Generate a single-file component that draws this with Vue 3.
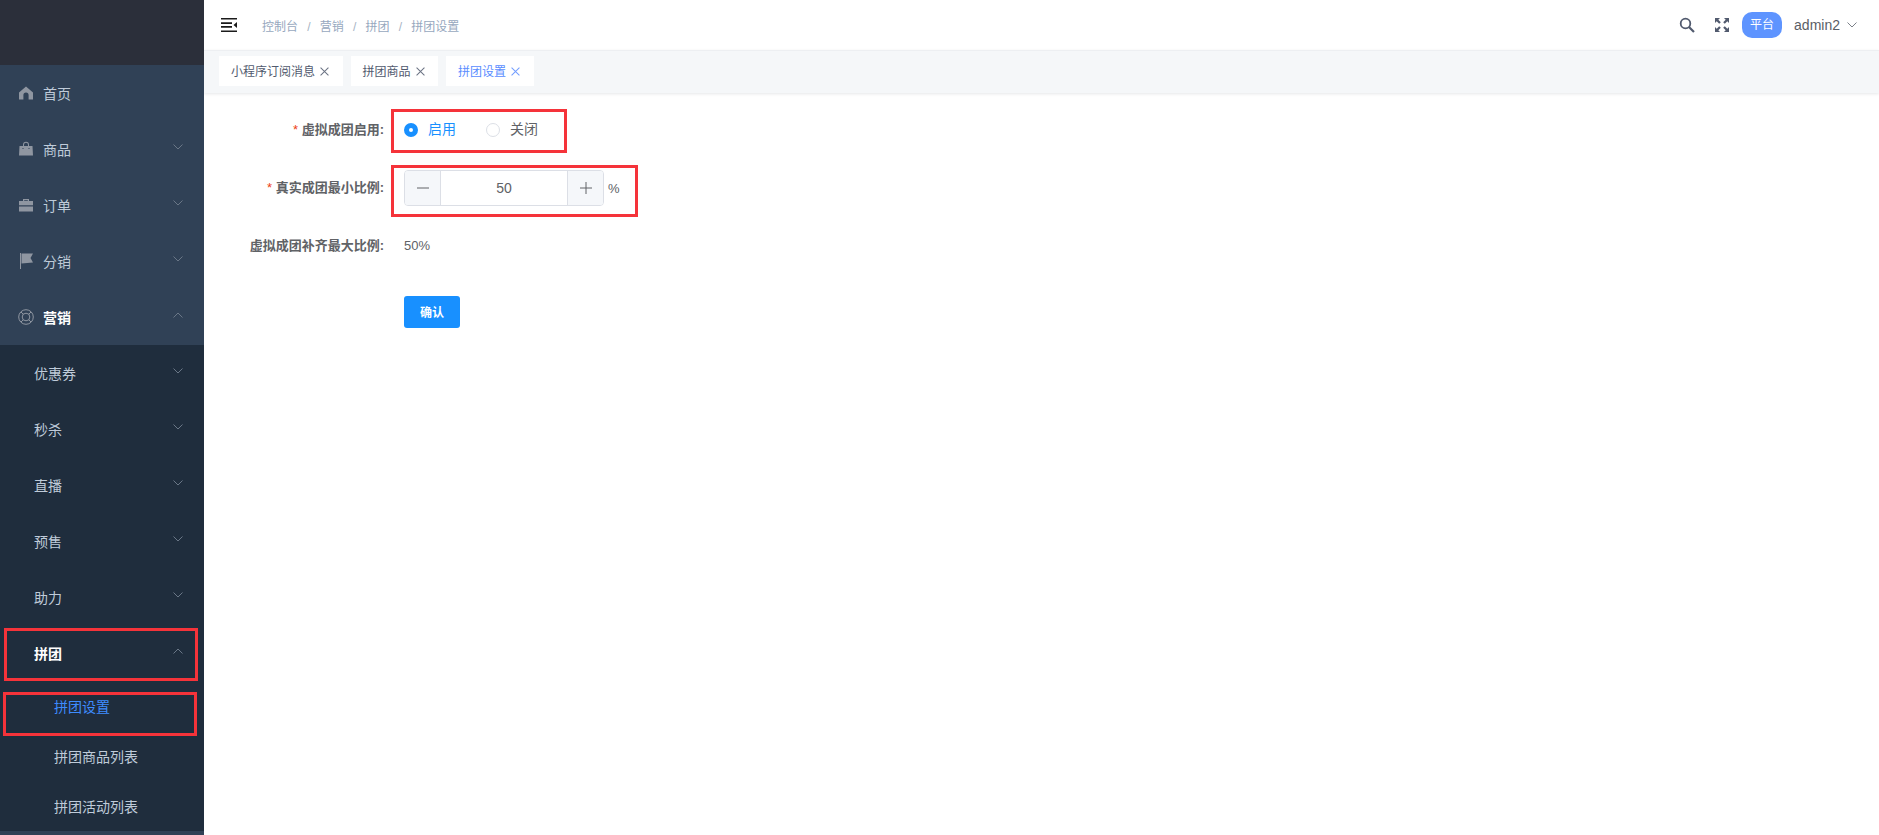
<script setup>
const topMenu = [
  { name: '首页', icon: 'home' },
  { name: '商品', icon: 'bag', arrow: 'down' },
  { name: '订单', icon: 'case', arrow: 'down' },
  { name: '分销', icon: 'flag', arrow: 'down' },
  { name: '营销', icon: 'buoy', arrow: 'up', active: true }
]
const subMenu = [
  { name: '优惠券', arrow: 'down' },
  { name: '秒杀', arrow: 'down' },
  { name: '直播', arrow: 'down' },
  { name: '预售', arrow: 'down' },
  { name: '助力', arrow: 'down' },
  { name: '拼团', arrow: 'up', active: true }
]
const leaves = [
  { name: '拼团设置', active: true },
  { name: '拼团商品列表' },
  { name: '拼团活动列表' }
]
const crumbs = ['控制台', '营销', '拼团', '拼团设置']
const tags = [
  { name: '小程序订阅消息' },
  { name: '拼团商品' },
  { name: '拼团设置', active: true }
]
</script>

<template>
  <div class="page">
    <aside class="sidebar">
      <div class="logo"></div>
      <div v-for="m in topMenu" :key="m.name" class="item top" :class="{ on: m.active }">
        <svg class="mi" viewBox="0 0 16 16">
          <path v-if="m.icon === 'home'" d="M8 1.500 15 7.500V14.500H10.600V10.200A2.600 2.600 0 0 0 5.400 10.200V14.500H1V7.500Z" />
          <path v-else-if="m.icon === 'bag'" fill-rule="evenodd" d="M5 5V3.800A3 3 0 0 1 11 3.800V5H14.500L15 14.500H1L1.500 5ZM6 5H10V3.800A2 2 0 0 0 6 3.800ZM4.500 7V8H5.500V7ZM10.500 7V8H11.500V7Z" />
          <path v-else-if="m.icon === 'case'" fill-rule="evenodd" d="M5 4V2H11V4H15V8.200H1V4ZM6.200 4H9.800V3.200H6.200ZM1 9.400H15V14.500H1Z" />
          <path v-else-if="m.icon === 'flag'" d="M2 0H3V16H2ZM3.500 0.500H15L12.500 5 15 9.500 3.500 10.500Z" />
          <g v-else fill="none" stroke="currentColor" stroke-width="1">
            <circle cx="8" cy="8" r="7.300" />
            <circle cx="8" cy="8" r="3.800" />
            <path d="M3 3 5.300 5.300M13 3 10.700 5.300M3 13 5.300 10.700M13 13 10.700 10.700" />
          </g>
        </svg>
        <span class="label">{{ m.name }}</span>
        <svg v-if="m.arrow" class="arrow" :class="m.arrow" viewBox="0 0 10 6"><path d="M.5.500 5 5 9.500.500" /></svg>
      </div>
      <div class="sub">
        <div v-for="s in subMenu" :key="s.name" class="item second" :class="{ on: s.active }">
          <span class="label">{{ s.name }}</span>
          <svg class="arrow" :class="s.arrow" viewBox="0 0 10 6"><path d="M.5.500 5 5 9.500.500" /></svg>
        </div>
        <div v-for="l in leaves" :key="l.name" class="item leaf" :class="{ cur: l.active }">
          <span class="label">{{ l.name }}</span>
        </div>
      </div>
      <div class="mark mark-a"></div>
      <div class="mark mark-b"></div>
    </aside>

    <main class="main">
      <header class="navbar">
        <svg class="hamb" viewBox="0 0 16 14">
          <path d="M0 0H16V1.500H0ZM0 4.200H11V6H0ZM0 8H11V9.800H0ZM0 12.500H16V14H0ZM16 4V10L12.500 7Z" />
        </svg>
        <nav class="crumbs">
          <template v-for="(c, i) in crumbs" :key="c">
            <span v-if="i" class="sep">/</span>
            <span>{{ c }}</span>
          </template>
        </nav>
        <div class="right">
          <svg class="tool" viewBox="0 0 16 16"><circle cx="6.500" cy="6.500" r="4.800" fill="none" stroke="#515a6e" stroke-width="1.800" /><path d="M10 10 15 15" stroke="#515a6e" stroke-width="2.200" /></svg>
          <svg class="tool full" viewBox="0 0 16 16"><path fill="#515a6e" d="M1 1H6L4.300 2.700 6.800 5.200 5.200 6.800 2.700 4.300 1 6ZM15 1V6L13.300 4.300 10.800 6.800 9.200 5.200 11.700 2.700 10 1ZM1 15V10L2.700 11.700 5.200 9.200 6.800 10.800 4.300 13.300 6 15ZM15 15H10L11.700 13.300 9.200 10.800 10.800 9.200 13.300 11.700 15 10Z" /></svg>
          <span class="badge">平台</span>
          <span class="user">admin2</span>
          <svg class="user-arrow" viewBox="0 0 10 6"><path d="M.5.500 5 5 9.500.500" /></svg>
        </div>
      </header>

      <div class="tags">
        <div v-for="t in tags" :key="t.name" class="tag" :class="{ active: t.active }">
          <span class="tag-text">{{ t.name }}</span>
          <svg class="close" viewBox="0 0 8 8"><path d="M.5.500 7.500 7.500M7.500.500 .5 7.500" /></svg>
        </div>
      </div>

      <form class="form" @submit.prevent>
        <div class="row r1">
          <label class="flabel"><i>*</i> 虚拟成团启用:</label>
          <div class="radios">
            <span class="radio checked"><b></b><em>启用</em></span>
            <span class="radio"><b></b><em>关闭</em></span>
          </div>
        </div>
        <div class="row r2">
          <label class="flabel"><i>*</i> 真实成团最小比例:</label>
          <div class="num">
            <span class="step">
              <svg viewBox="0 0 12 12"><path d="M0 6H12" /></svg>
            </span>
            <span class="val">50</span>
            <span class="step">
              <svg viewBox="0 0 12 12"><path d="M0 6H12M6 0V12" /></svg>
            </span>
          </div>
          <span class="pct">%</span>
        </div>
        <div class="row r3">
          <label class="flabel">虚拟成团补齐最大比例:</label>
          <span class="plain">50%</span>
        </div>
        <div class="row r4">
          <button class="btn" type="button">确认</button>
        </div>
        <div class="mark mark-c"></div>
        <div class="mark mark-d"></div>
      </form>
    </main>
  </div>
</template>

<style scoped>
.page {
  display: flex;
  width: 1879px;
  height: 835px;
  overflow: hidden;
  background: #fff;
  font-family: "Liberation Sans", "Noto Sans CJK SC", sans-serif;
  font-size: 12px;
  color: #515a6e;
}
.sidebar {
  position: relative;
  width: 204px;
  flex: none;
  background: #304156;
  overflow: hidden;
}
.logo {
  height: 65px;
  background: #2b2f3a;
}
.item {
  display: flex;
  align-items: center;
  color: #bfcbd9;
  font-size: 14px;
}
.top {
  height: 56px;
  padding-left: 18px;
  box-sizing: border-box;
}
.top.on .label,
.second.on .label {
  color: #fff;
  font-weight: 700;
}
.mi {
  width: 16px;
  height: 16px;
  margin-right: 9px;
  fill: #8f96a1;
  color: #8f96a1;
  flex: none;
}
.arrow {
  width: 10px;
  height: 6px;
  margin-left: auto;
  margin-right: 21px;
  margin-top: -4px;
  fill: none;
  stroke: #6a7787;
  stroke-width: 1;
}
.arrow.up {
  transform: rotate(180deg);
}
.sub {
  background: #1f2d3d;
  height: 486px;
}
.second {
  height: 56px;
  padding-left: 34px;
  box-sizing: border-box;
}
.leaf {
  height: 50px;
  padding-left: 54px;
  padding-bottom: 1px;
  box-sizing: border-box;
}
.leaf.cur {
  color: #3e8cff;
}
.mark {
  position: absolute;
  box-sizing: border-box;
  border: 3px solid #f5333a;
  pointer-events: none;
}
.mark-a {
  left: 4px;
  top: 628px;
  width: 194px;
  height: 53px;
}
.mark-b {
  left: 3px;
  top: 692px;
  width: 194px;
  height: 44px;
}
.main {
  flex: 1;
  min-width: 0;
  display: flex;
  flex-direction: column;
}
.navbar {
  height: 50px;
  flex: none;
  display: flex;
  align-items: center;
  padding: 0 22px 0 17px;
  box-sizing: border-box;
}
.hamb {
  width: 16px;
  height: 14px;
  fill: #1b1b1b;
  flex: none;
}
.crumbs {
  display: flex;
  align-items: baseline;
  gap: 9.200px;
  margin-left: 25px;
  color: #97a8be;
}
.sep {
  color: #a6b3c4;
}
.right {
  margin-left: auto;
  display: flex;
  align-items: center;
}
.tool {
  width: 16px;
  height: 16px;
  flex: none;
}
.full {
  margin-left: 19px;
}
.badge {
  width: 40px;
  height: 26px;
  margin-left: 12px;
  border-radius: 10px;
  background: #5e94ff;
  color: #fff;
  line-height: 26px;
  text-align: center;
}
.user {
  margin-left: 12px;
  font-size: 14px;
  color: #5a5e66;
}
.user-arrow {
  width: 10px;
  height: 6px;
  margin-left: 7px;
  fill: none;
  stroke: #7b8088;
  stroke-width: 1;
}
.tags {
  height: 43px;
  flex: none;
  display: flex;
  gap: 8px;
  padding: 5px 0 0 15px;
  box-sizing: border-box;
  background: #f5f7f9;
  box-shadow: 0 1px 3px rgba(0, 21, 41, .1);
  border-top: 1px solid #edeff2;
}
.tag {
  height: 30px;
  padding: 0 13.500px 0 12px;
  display: flex;
  align-items: center;
  gap: 5px;
  background: #fff;
  color: #515a6e;
}
.tag-text {
  margin-top: -2px;
}
.tag.active {
  color: #5a8dff;
}
.close {
  width: 9px;
  height: 9px;
  fill: none;
  stroke: currentColor;
  stroke-width: .9;
  opacity: .85;
}
.form {
  position: relative;
  flex: 1;
  margin: 0;
}
.row {
  display: flex;
  align-items: center;
  position: absolute;
  left: 0;
}
.r1 { top: 15px; height: 44px; }
.r2 { top: 73px; height: 44px; }
.r3 { top: 131px; height: 44px; }
.r4 { top: 203px; height: 32px; left: 200px; }
.flabel {
  width: 180px;
  margin-right: 20px;
  margin-top: -4px;
  text-align: right;
  font-size: 13px;
  font-weight: 700;
  color: #606266;
  white-space: nowrap;
}
.flabel i {
  font-style: normal;
  font-weight: 400;
  color: #ed4014;
}
.radios {
  display: flex;
  gap: 30px;
}
.radio {
  display: flex;
  align-items: center;
  gap: 10px;
  font-size: 14px;
  color: #606266;
}
.radio em {
  font-style: normal;
  margin-top: -5px;
}
.radio b {
  width: 14px;
  height: 14px;
  box-sizing: border-box;
  border: 1px solid #dcdfe6;
  border-radius: 50%;
  background: #fff;
}
.radio.checked {
  color: #1890ff;
}
.radio.checked b {
  border: 5px solid #1890ff;
}
.num {
  width: 200px;
  height: 36px;
  box-sizing: border-box;
  border: 1px solid #dcdfe6;
  border-radius: 4px;
  display: flex;
  overflow: hidden;
  color: #606266;
}
.step {
  width: 35px;
  flex: none;
  display: flex;
  align-items: center;
  justify-content: center;
  background: #f5f7fa;
}
.step svg {
  width: 12px;
  height: 12px;
  fill: none;
  stroke: #606266;
  stroke-width: 1;
}
.val {
  flex: 1;
  text-align: center;
  line-height: 34px;
  font-size: 14px;
  border-left: 1px solid #dcdfe6;
  border-right: 1px solid #dcdfe6;
}
.pct {
  margin-left: 4px;
  color: #606266;
  font-size: 13px;
}
.plain {
  font-size: 13px;
  margin-top: -2px;
  color: #606266;
}
.btn {
  width: 56px;
  height: 32px;
  border: 0;
  border-radius: 3px;
  padding: 0 0 2px;
  background: #1890ff;
  color: #fff;
  font: 700 12px "Liberation Sans", "Noto Sans CJK SC", sans-serif;
}
.mark-c {
  left: 187px;
  top: 16px;
  width: 176px;
  height: 44px;
}
.mark-d {
  left: 187px;
  top: 72px;
  width: 247px;
  height: 52px;
}
</style>

<style>
html, body {
  margin: 0;
  overflow: hidden;
}
</style>
